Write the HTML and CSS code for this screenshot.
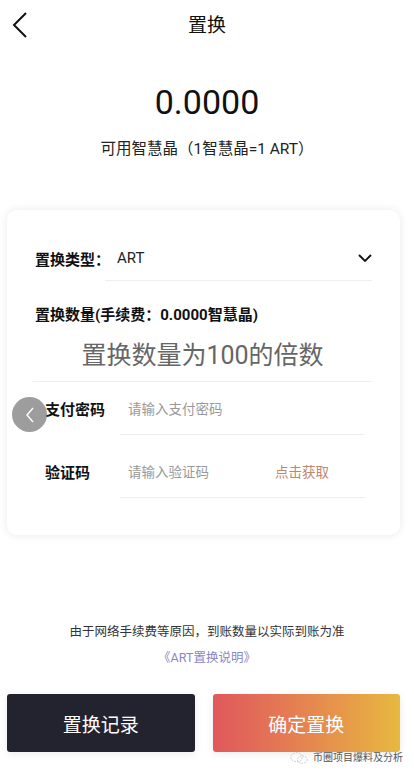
FILE: index.html
```html
<!DOCTYPE html>
<html>
	<head>
		<meta charset="utf-8">
		<title>置换</title>
		<link rel="stylesheet" href="styles.css">
	</head>
	<body>
		<div class="page">
			<div class="header">
				<svg class="back" width="16" height="26" viewBox="0 0 16 26"><path d="M14 1 L2 13 L14 25" fill="none" stroke="#111" stroke-width="2"/></svg>
				<div class="title">置换</div>
			</div>
			<div class="amount">0.0000</div>
			<div class="sub">可用智慧晶（1智慧晶=1 ART）</div>

			<div class="card">
				<div class="row type-row">
					<div class="label type-label">置换类型：</div>
					<div class="field type-field">
						<span class="val">ART</span>
						<svg width="14" height="9" viewBox="0 0 14 9"><path d="M1 1 L7 7 L13 1" fill="none" stroke="#111" stroke-width="1.8"/></svg>
					</div>
				</div>
				<div class="qty-label">置换数量(手续费：0.0000智慧晶)</div>
				<div class="qty-input">置换数量为100的倍数</div>
				<div class="row pwd-row">
					<div class="label">支付密码</div>
					<div class="field"><span class="ph">请输入支付密码</span></div>
				</div>
				<div class="row code-row">
					<div class="label">验证码</div>
					<div class="field"><span class="ph">请输入验证码</span><span class="get">点击获取</span></div>
				</div>
			</div>

			<div class="note">由于网络手续费等原因，到账数量以实际到账为准</div>
			<div class="link">《ART置换说明》</div>
			<div class="btns">
				<div class="btn dark">置换记录</div>
				<div class="btn warm">确定置换</div>
			</div>

			<div class="float-back">
				<svg width="10" height="16" viewBox="0 0 10 16"><path d="M8 1 L2 8 L8 15" fill="none" stroke="#fff" stroke-width="1.4"/></svg>
			</div>
			<div class="mark">
				<svg width="18" height="14" viewBox="0 0 22 16"><ellipse cx="8" cy="7" rx="7" ry="5.5" fill="none" stroke="#bbb" stroke-width="1" stroke-dasharray="2 1.5"/><ellipse cx="15" cy="10" rx="6" ry="4.5" fill="none" stroke="#bbb" stroke-width="1" stroke-dasharray="2 1.5"/></svg>
				<span>币圈项目爆料及分析</span>
			</div>
		</div>
	</body>
</html>
```

FILE: styles.css
```css
body{
	margin:0;
	background-color:#ffffff;
	font-family:Roboto, "Noto Sans CJK SC", sans-serif;
	color:#111;
}
.page{
	position:relative;
	width:414px;
	height:777px;
	overflow:hidden;
}
.header{
	position:relative;
	height:52px;
	display:flex;
	align-items:center;
	justify-content:center;
}
.back{
	position:absolute;
	left:12px;
	top:12px;
}
.title{
	font-size:19px;
	line-height:24px;
}
.amount{
	margin-top:30px;
	text-align:center;
	font-size:34px;
	line-height:40px;
	color:#111;
}
.sub{
	margin-top:17px;
	text-align:center;
	font-size:15.5px;
	line-height:20px;
	color:#222;
}
.card{
	margin:51px 14px 0 7px;
	height:325px;
	box-sizing:border-box;
	padding-top:26px;
	border-radius:10px;
	background-color:#fff;
	box-shadow:0 0 10px rgba(0,0,0,0.09);
}
.row{
	display:flex;
	align-items:stretch;
}
.label{
	display:flex;
	align-items:center;
	flex-shrink:0;
	white-space:nowrap;
	font-size:15px;
	font-weight:bold;
	color:#111;
}
.field{
	flex:1;
	display:flex;
	align-items:center;
	border-bottom:1px solid #eeeeee;
}
.type-row{
	height:45px;
	margin:0 28px 0 28px;
}
.type-label{
	width:70px;
}
.type-field{
	justify-content:space-between;
	padding-left:12px;
}
.val{
	font-size:15px;
	color:#222;
}
.qty-label{
	margin:24px 0 0 28px;
	font-size:15px;
	line-height:20px;
	font-weight:bold;
}
.qty-input{
	margin:0 28px 0 26px;
	height:56px;
	display:flex;
	align-items:center;
	justify-content:center;
	font-size:25px;
	color:#666;
	border-bottom:1px solid #eeeeee;
}
.pwd-row, .code-row{
	margin:0 35px 0 38px;
	height:53px;
}
.code-row{
	margin-top:10px;
}
.pwd-row .label, .code-row .label{
	width:75px;
}
.ph{
	padding-left:8px;
	font-size:13.5px;
	color:#999;
	width:147px;
}
.get{
	font-size:13.5px;
	color:#c0866c;
}
.note{
	margin-top:87px;
	text-align:center;
	font-size:12.5px;
	line-height:20px;
	color:#333;
}
.link{
	margin-top:6px;
	text-align:center;
	font-size:12.5px;
	line-height:20px;
	color:#8a86c4;
}
.btns{
	margin:26px 14px 0 7px;
	display:flex;
	gap:18px;
}
.btn{
	flex:1;
	height:58px;
	border-radius:3px;
	display:flex;
	align-items:center;
	justify-content:center;
	font-size:19px;
	color:#fff;
	box-shadow:0 2px 8px rgba(0,0,0,0.08);
}
.dark{
	background-color:#23222f;
}
.warm{
	background:linear-gradient(to right, #e0585d, #e58550 50%, #e8b840);
}
.float-back{
	position:absolute;
	left:12px;
	top:397px;
	width:35px;
	height:35px;
	border-radius:50%;
	background-color:rgba(140,140,140,0.85);
	display:flex;
	align-items:center;
	justify-content:center;
}
.mark{
	position:absolute;
	left:290px;
	top:751px;
	display:flex;
	align-items:center;
	gap:5px;
	white-space:nowrap;
	font-size:10px;
	line-height:14px;
	color:#555;
}
```
